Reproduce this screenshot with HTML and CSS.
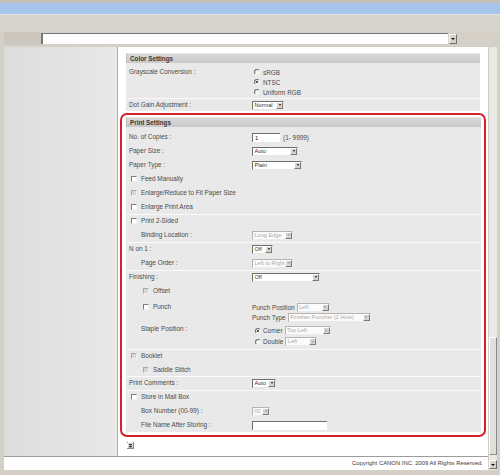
FILE: index.html
```html
<!DOCTYPE html>
<html>
<head>
<meta charset="utf-8">
<link rel="stylesheet" href="styles.css">
</head>
<body>
<div class="topline"></div>
<div class="titlebar"></div>
<div class="toolbar"></div>
<div class="addrrow">
  <div class="addr-left"></div>
  <div class="addr-input"></div>
  <div class="addr-btn"></div>
</div>
<div class="gap"></div>
<div class="frame">
  <div class="page">
    <div class="panes">
      <div class="nav"></div>
      <div class="content">
        <div class="sect color">
          <div class="sect-hd">Color Settings</div>
          <div class="row row-gray">
            <div class="lbl">Grayscale Conversion :</div>
            <div class="val radios">
              <div class="rline"><span class="radio"></span>sRGB</div>
              <div class="rline"><span class="radio on"></span>NTSC</div>
              <div class="rline"><span class="radio"></span>Uniform RGB</div>
            </div>
          </div>
          <div class="grp">
            <div class="row row-dot">
              <div class="lbl">Dot Gain Adjustment :</div>
              <div class="val"><span class="sel w32"><span class="sel-t">Normal</span><span class="sel-b"></span></span></div>
            </div>
          </div>
        </div>

        <div class="redbox">
          <div class="sect print">
            <div class="sect-hd">Print Settings</div>
            <div class="body">
              <div class="grp">
                <div class="row">
                  <div class="lbl">No. of Copies :</div>
                  <div class="val"><span class="inp w28">1</span><span class="hint">(1- 9999)</span></div>
                </div>
                <div class="row">
                  <div class="lbl">Paper Size :</div>
                  <div class="val"><span class="sel w46"><span class="sel-t">Auto</span><span class="sel-b"></span></span></div>
                </div>
                <div class="row">
                  <div class="lbl">Paper Type :</div>
                  <div class="val"><span class="sel w50"><span class="sel-t">Plain</span><span class="sel-b"></span></span></div>
                </div>
                <div class="row">
                  <div class="lbl chk"><span class="cb"></span>Feed Manually</div>
                </div>
                <div class="row">
                  <div class="lbl chk"><span class="cb dis"></span>Enlarge/Reduce to Fit Paper Size</div>
                </div>
                <div class="row">
                  <div class="lbl chk"><span class="cb"></span>Enlarge Print Area</div>
                </div>
              </div>

              <div class="grp">
                <div class="row">
                  <div class="lbl chk"><span class="cb"></span>Print 2-Sided</div>
                </div>
                <div class="row">
                  <div class="lbl ind">Binding Location :</div>
                  <div class="val"><span class="sel dis w41"><span class="sel-t">Long Edge</span><span class="sel-b"></span></span></div>
                </div>
              </div>

              <div class="grp">
                <div class="row">
                  <div class="lbl">N on 1 :</div>
                  <div class="val"><span class="sel w21"><span class="sel-t">Off</span><span class="sel-b"></span></span></div>
                </div>
                <div class="row">
                  <div class="lbl ind">Page Order :</div>
                  <div class="val"><span class="sel dis w41"><span class="sel-t">Left to Right</span><span class="sel-b"></span></span></div>
                </div>
              </div>

              <div class="grp">
                <div class="row">
                  <div class="lbl">Finishing :</div>
                  <div class="val"><span class="sel w68"><span class="sel-t">Off</span><span class="sel-b"></span></span></div>
                </div>
                <div class="row">
                  <div class="lbl chk ind2"><span class="cb dis"></span>Offset</div>
                </div>
                <div class="row row-punch">
                  <div class="lbl chk ind2"><span class="cb"></span>Punch</div>
                  <div class="val stack">
                    <div class="pline">Punch Position<span class="sel dis w33"><span class="sel-t">Left</span><span class="sel-b"></span></span></div>
                    <div class="pline">Punch Type<span class="sel dis w83"><span class="sel-t">Finisher Puncher (2 Hole)</span><span class="sel-b"></span></span></div>
                  </div>
                </div>
                <div class="row row-staple">
                  <div class="lbl ind">Staple Position :</div>
                  <div class="val stack">
                    <div class="sline"><span class="radio on"></span><span class="stxt">Corner</span><span class="sel dis w46"><span class="sel-t">Top Left</span><span class="sel-b"></span></span></div>
                    <div class="sline"><span class="radio"></span><span class="stxt">Double</span><span class="sel dis w32"><span class="sel-t">Left</span><span class="sel-b"></span></span></div>
                  </div>
                </div>
              </div>

              <div class="grp">
                <div class="row">
                  <div class="lbl chk"><span class="cb dis"></span>Booklet</div>
                </div>
                <div class="row short">
                  <div class="lbl chk ind2"><span class="cb dis"></span>Saddle Stitch</div>
                </div>
              </div>

              <div class="grp">
                <div class="row">
                  <div class="lbl">Print Comments :</div>
                  <div class="val"><span class="sel w24"><span class="sel-t">Auto</span><span class="sel-b"></span></span></div>
                </div>
              </div>

              <div class="grp">
                <div class="row">
                  <div class="lbl chk"><span class="cb"></span>Store in Mail Box</div>
                </div>
                <div class="row">
                  <div class="lbl ind">Box Number (00-99) :</div>
                  <div class="val"><span class="sel dis w18"><span class="sel-t">00</span><span class="sel-b"></span></span></div>
                </div>
                <div class="row">
                  <div class="lbl ind">File Name After Storing :</div>
                  <div class="val"><span class="inp w75"></span></div>
                </div>
              </div>
            </div>
          </div>
        </div>

        <div class="totop">
          <svg width="7" height="7" viewBox="0 0 7 7">
            <rect x="0.5" y="0.5" width="6" height="6" fill="#d6d3cd" stroke="#8c8c8c"/>
            <line x1="1" y1="0.5" x2="6" y2="0.5" stroke="#ffffff"/>
            <line x1="0.5" y1="1" x2="0.5" y2="6" stroke="#ffffff"/>
            <rect x="2" y="2" width="3" height="0.8" fill="#111"/>
            <path d="M3.5 3.2 L5.2 5.2 L1.8 5.2 Z" fill="#111"/>
          </svg>
        </div>
      </div>
    </div>
    <div class="footer">Copyright CANON INC. 2009 All Rights Reserved.</div>
  </div>
  <div class="vscroll">
    <div class="track"></div>
    <div class="thumb"></div>
    <div class="down-btn"></div>
  </div>
</div>
</body>
</html>
```
FILE: styles.css
```css
html, body {
  margin: 0;
  padding: 0;
}
body {
  width: 500px;
  height: 475px;
  overflow: hidden;
  background: #d4d0c8;
  font-family: "Liberation Sans", Arial, sans-serif;
  font-size: 6.4px;
  color: #4a4a4a;
}

.topline { height: 3px; background: #c3c0b9; }
.titlebar { height: 11px; background: #a7c4eb; }
.toolbar {
  height: 17px;
  background: #d7d4ce;
  border-top: 1px solid #e3e1dc;
}
.addrrow {
  height: 13px;
  display: flex;
  align-items: center;
  padding-left: 4px;
}
.addr-left {
  width: 37px;
  height: 13px;
  background: #cbc7be;
}
.addr-input {
  width: 405px;
  height: 10px;
  background: #fff;
  border-top: 1px solid #767676;
  border-left: 2px solid #767676;
}
.addr-btn {
  width: 8px;
  height: 10px;
  margin-left: 1px;
  box-sizing: border-box;
  background: #d6d3cd;
  border: 1px solid;
  border-color: #f4f4f4 #6e6e6e #6e6e6e #f4f4f4;
  display: flex;
  align-items: center;
  justify-content: center;
}
.addr-btn::after {
  content: "";
  border-left: 2px solid transparent;
  border-right: 2px solid transparent;
  border-top: 2px solid #111;
}
.gap { height: 2px; }

.frame {
  display: flex;
  height: 423px;
  padding-left: 4px;
}
.page {
  width: 484px;
  display: flex;
  flex-direction: column;
}
.panes {
  height: 409px;
  display: flex;
}
.nav {
  width: 113px;
  background: linear-gradient(to right, #dcdcdc, #e9e9e9);
  border-right: 1px solid #a9a9a9;
}
.content {
  flex: 1;
  background: #fff;
  padding: 6px 2px 0 2px;
  display: flex;
  flex-direction: column;
}
.footer {
  height: 13px;
  background: #fff;
  border-top: 1px solid #9c9c9c;
  font-size: 5.9px;
  line-height: 13px;
  text-align: right;
  padding-right: 5px;
  color: #3a3a3a;
}

.vscroll {
  width: 9px;
  display: flex;
  flex-direction: column;
  background: #ebe9e4;
  border-left: 1px solid #cfcdc8;
  box-sizing: border-box;
}
.track { height: 290px; }
.thumb {
  height: 118px;
  box-sizing: border-box;
  background: #e1dfda;
  border: 1px solid;
  border-color: #ffffff #8a8a8a #8a8a8a #ffffff;
}
.down-btn {
  margin-top: 5px;
  height: 9px;
  box-sizing: border-box;
  background: #d6d3cd;
  border: 1px solid;
  border-color: #ffffff #6e6e6e #6e6e6e #ffffff;
  display: flex;
  align-items: center;
  justify-content: center;
}
.down-btn::after {
  content: "";
  border-left: 2px solid transparent;
  border-right: 2px solid transparent;
  border-top: 2px solid #111;
}

/* sections */
.sect {
  background: #e9e9e9;
}
.color {
  margin: 0 6px;
}
.sect-hd {
  height: 10px;
  box-sizing: border-box;
  background: linear-gradient(#d9d9d9, #c8c8c8);
  border-top: 1px solid #e4e4e4;
  border-left: 1px solid #bdbdbd;
  padding-left: 3px;
  font-weight: bold;
  font-size: 6.3px;
  line-height: 9px;
  color: #383838;
}
.redbox {
  margin-top: 2px;
  border: 2px solid #d6202b;
  border-radius: 7px;
  padding: 2px 3px 3px 4px;
}
.body {
  padding-top: 3px;
}
.grp + .grp,
.color .grp {
  background: linear-gradient(#fafafa, #fafafa) top / 100% 1px no-repeat;
}

.row {
  display: flex;
  align-items: center;
  height: 14px;
}
.row.short { height: 13px; }
.lbl {
  width: 123px;
  padding-left: 3px;
  line-height: 10px;
  white-space: nowrap;
}
.lbl.chk {
  display: flex;
  align-items: center;
  padding-left: 5px;
  width: 121px;
}
.lbl.ind { padding-left: 15px; width: 111px; }
.lbl.chk.ind2 { padding-left: 17px; width: 109px; }
.val {
  display: flex;
  align-items: center;
  white-space: nowrap;
}

.row-gray {
  height: 35px;
  align-items: flex-start;
  padding-top: 4px;
  box-sizing: border-box;
}
.radios { flex-direction: column; align-items: flex-start; }
.rline {
  height: 10px;
  display: flex;
  align-items: center;
  padding-left: 2px;
}
.rline .radio { margin-right: 3px; }
.row-dot { height: 13px; padding-top: 1px; box-sizing: border-box; }

.row-punch {
  height: 25px;
  align-items: flex-start;
  padding-top: 4px;
  box-sizing: border-box;
}
.row-staple {
  height: 26px;
  align-items: flex-start;
  padding-top: 2px;
  box-sizing: border-box;
}
.row-staple .lbl { line-height: 10px; margin-top: -1px; }
.stack { flex-direction: column; align-items: flex-start; }
.pline {
  height: 10px;
  display: flex;
  align-items: center;
  gap: 2px;
}
.sline {
  height: 11px;
  display: flex;
  align-items: center;
  padding-left: 3px;
}
.sline .radio { margin-right: 2px; }
.stxt { margin-right: 2px; }

/* controls */
.cb {
  width: 6px;
  height: 6px;
  box-sizing: border-box;
  background: #fff;
  border: 1px solid;
  border-color: #7c7c7c #f2f2f2 #f2f2f2 #7c7c7c;
  margin-right: 4px;
  flex: none;
}
.cb.dis {
  background: #d6d6d6;
  border-color: #a8a8a8 #f2f2f2 #f2f2f2 #a8a8a8;
}
.radio {
  width: 6px;
  height: 6px;
  box-sizing: border-box;
  border-radius: 50%;
  border: 1px solid;
  border-color: #6e6e6e #f4f4f4 #f4f4f4 #6e6e6e;
  background: #f4f4f4;
  position: relative;
  flex: none;
}
.radio.on::after {
  content: "";
  position: absolute;
  left: 1px;
  top: 1px;
  width: 2px;
  height: 2px;
  border-radius: 50%;
  background: #222;
}

.sel {
  display: inline-flex;
  align-items: center;
  height: 9px;
  box-sizing: border-box;
  border: 1px solid;
  border-color: #6f6f6f #e6e6e6 #e6e6e6 #6f6f6f;
  background: #fff;
  flex: none;
}
.sel-t {
  flex: 1;
  padding-left: 1.5px;
  font-size: 5.6px;
  line-height: 7px;
  overflow: hidden;
  white-space: nowrap;
  color: #333;
}
.sel-b {
  width: 7px;
  height: 7px;
  box-sizing: border-box;
  background: #d6d3cd;
  border: 1px solid;
  border-color: #ffffff #7a7a7a #7a7a7a #ffffff;
  display: flex;
  align-items: center;
  justify-content: center;
  flex: none;
}
.sel-b::after {
  content: "";
  border-left: 1.5px solid transparent;
  border-right: 1.5px solid transparent;
  border-top: 2px solid #111;
}
.sel.dis {
  border-color: #b4b4b4 #ececec #ececec #b4b4b4;
  background: #fbfbfb;
}
.sel.dis .sel-t { color: #a9a9a9; }
.sel.dis .sel-b::after { border-top-color: #9a9a9a; }

.inp {
  display: inline-block;
  height: 9px;
  box-sizing: border-box;
  background: #fff;
  border-top: 1px solid #6f6f6f;
  border-left: 1px solid #6f6f6f;
  font-size: 5.8px;
  line-height: 8px;
  padding-left: 2px;
  color: #222;
}
.hint { margin-left: 3px; }

.w18 { width: 18px; }
.w21 { width: 21px; }
.w24 { width: 24px; }
.w28 { width: 28px; }
.w32 { width: 32px; }
.w33 { width: 33px; }
.w41 { width: 41px; }
.w46 { width: 46px; }
.w50 { width: 50px; }
.w68 { width: 68px; }
.w75 { width: 75px; }
.w83 { width: 83px; }

.totop {
  margin-top: 5px;
  margin-left: 7px;
  height: 7px;
  display: flex;
}
.totop svg { display: block; }
```
